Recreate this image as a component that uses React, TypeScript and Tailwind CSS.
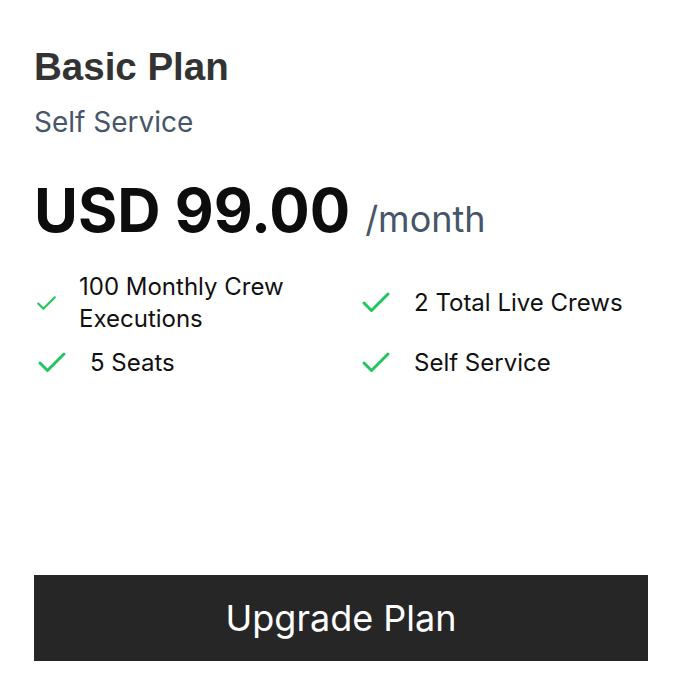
import { Check } from "lucide-react";

const features = [
  { label: "100 Monthly Crew Executions", size: 25 },
  { label: "2 Total Live Crews", size: 36 },
  { label: "5 Seats", size: 36 },
  { label: "Self Service", size: 36 },
];

const App = () => {
  return (
    <div className="w-[688px] h-[700px] bg-white pl-[34px] pr-[40px] pt-[45px] pb-[39px] flex flex-col font-['Inter',sans-serif]">
      <h2 className="text-[38.5px] leading-[44px] font-bold text-[#333333] font-['Liberation_Sans',Arial,sans-serif]">
        Basic Plan
      </h2>
      <p className="mt-[16px] text-[28px] leading-[34px] text-[#475569]">Self Service</p>

      <div className="mt-[35px] flex items-baseline gap-[15px]">
        <span className="text-[60px] leading-[72px] font-bold text-[#0d0d0d]">USD 99.00</span>
        <span className="text-[36px] leading-[44px] text-[#475569]">/month</span>
      </div>

      {/* features */}
      <div className="mt-[25px] grid grid-cols-2 gap-x-[34px] gap-y-[10px]">
        {features.map((f) => (
          <div key={f.label} className="flex items-center gap-5">
            <Check size={f.size} strokeWidth={2} className="shrink-0 text-[#22c55e]" />
            <span className="text-[24px] leading-8 text-[#111111]">{f.label}</span>
          </div>
        ))}
      </div>

      <button className="mt-auto h-[86px] w-full bg-[#262626] text-white text-[36px] leading-none">
        Upgrade Plan
      </button>
    </div>
  );
};

export default App;
